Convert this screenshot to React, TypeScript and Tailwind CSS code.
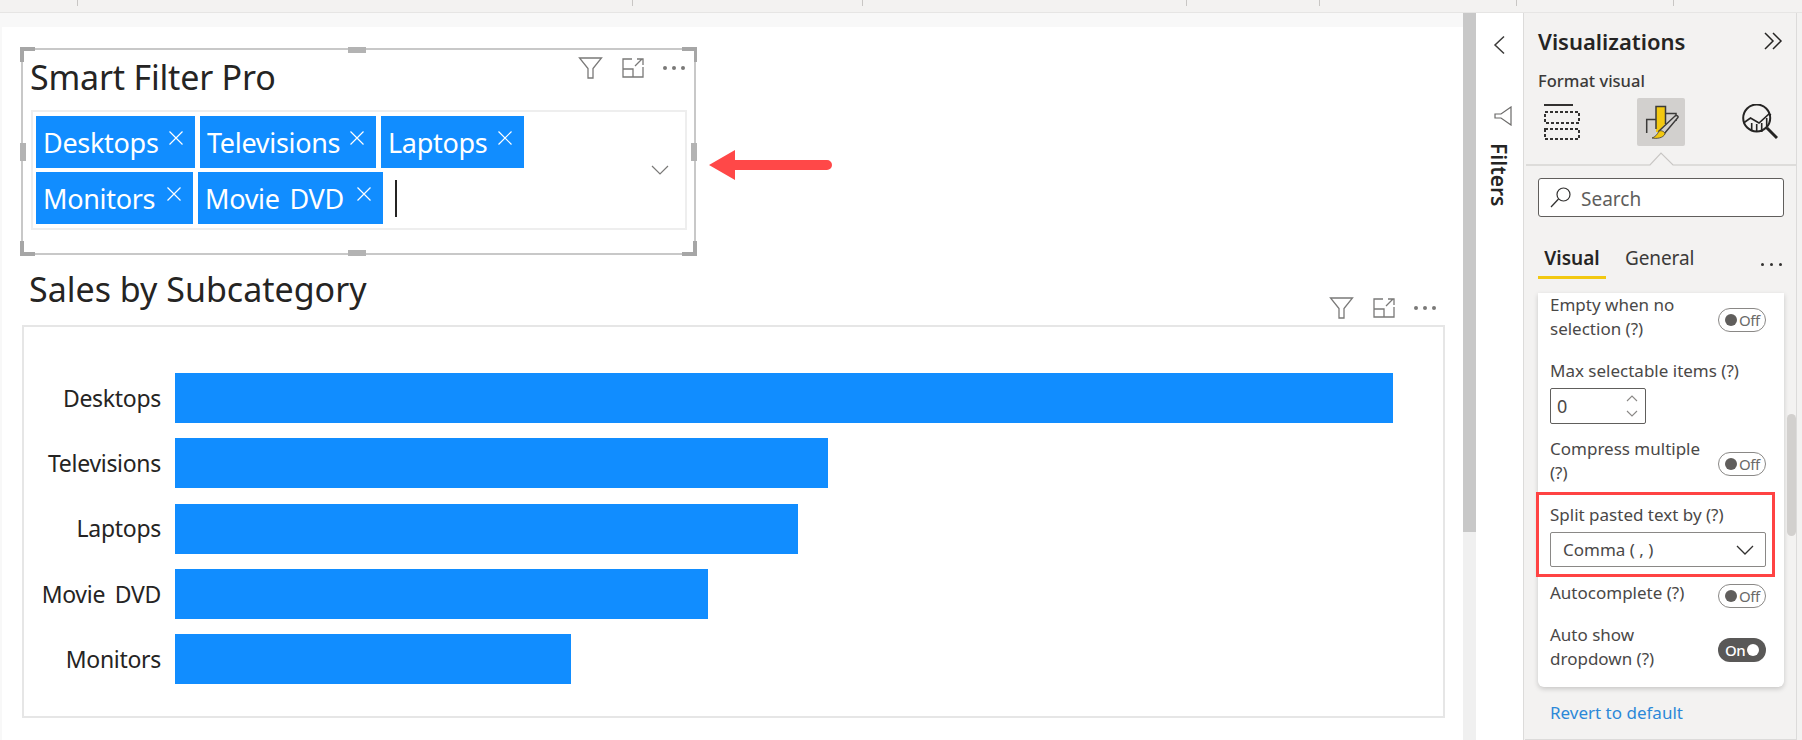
const topSegments = ['w-[78px]', 'w-[555px]', 'w-[230px]', 'w-[324px]', 'w-[133px]', 'w-[197px]', 'w-[157px]']

const bars = [
  { label: 'Desktops', width: 'w-[1218px]' },
  { label: 'Televisions', width: 'w-[653px]' },
  { label: 'Laptops', width: 'w-[623px]' },
  { label: 'Movie DVD', width: 'w-[533px]' },
  { label: 'Monitors', width: 'w-[396px]' },
]

function FunnelIcon() {
  return (
    <svg width="25" height="22" viewBox="0 0 25 22" fill="none" stroke="#7a7978" strokeWidth="1.3">
      <path d="M1.5 1h22l-8.5 10.5V21h-5v-9.5z" />
    </svg>
  )
}

function ExpandIcon() {
  return (
    <svg width="22" height="20" viewBox="0 0 22 20" fill="none" stroke="#7a7978" strokeWidth="1.3">
      <path d="M10 1H1v18h20V9M1 11h10v8M13 8l7-7M15 1h6v6" />
    </svg>
  )
}

function Dots() {
  return (
    <div className="flex gap-[5px]">
      <span className="w-[4px] h-[4px] rounded-full bg-[#7a7978]" />
      <span className="w-[4px] h-[4px] rounded-full bg-[#7a7978]" />
      <span className="w-[4px] h-[4px] rounded-full bg-[#7a7978]" />
    </div>
  )
}

function VisualIcons() {
  return (
    <div className="flex items-center">
      <div className="w-[26px] flex justify-center"><FunnelIcon /></div>
      <div className="w-[23px] ml-[18px] flex justify-center"><ExpandIcon /></div>
      <div className="w-[22px] ml-[19px] flex justify-center"><Dots /></div>
    </div>
  )
}

function CloseIcon() {
  return (
    <svg width="16" height="16" viewBox="0 0 16 16" fill="none" stroke="#ffffff" strokeWidth="1.2" className="shrink-0">
      <path d="M1.5 1.5l13 13M14.5 1.5l-13 13" />
    </svg>
  )
}

function Chip({ label, width }: { label: string; width: string }) {
  return (
    <div className={`${width} h-[52px] bg-[#118dff] text-white flex items-center justify-between pl-[7px] pr-[11px]`}>
      <span className="text-[27px] leading-none tracking-[-0.3px] [word-spacing:3px] whitespace-nowrap">{label}</span>
      <span className="-mt-[8px]"><CloseIcon /></span>
    </div>
  )
}

function Toggle({ on }: { on?: boolean }) {
  if (on) {
    return (
      <div className="w-[48px] h-[24px] rounded-full bg-[#595857] flex items-center justify-between pl-[7px] pr-[7px] text-white">
        <span className="text-[15px] leading-none font-medium tracking-[-0.5px]">On</span>
        <span className="w-[12px] h-[12px] rounded-full bg-white" />
      </div>
    )
  }
  return (
    <div className="w-[48px] h-[24px] rounded-full border border-[#8a8886] bg-white flex items-center pl-[6px] gap-[2px] text-[#6b6a69]">
      <span className="w-[12px] h-[12px] rounded-full bg-[#605e5c]" />
      <span className="text-[15px] leading-none tracking-[-0.5px]">Off</span>
    </div>
  )
}

function Handle({ className }: { className: string }) {
  return <div className={`absolute bg-[#b3b3b3] ${className}`} />
}

function Corner({ className, d }: { className: string; d: string }) {
  return (
    <svg width="15" height="15" viewBox="0 0 15 15" className={`absolute ${className}`} fill="#a6a6a6">
      <path d={d} />
    </svg>
  )
}

function SmartFilter() {
  return (
    <div className="relative ml-[19px] mt-[21px] w-[675px] h-[207px] border-2 border-[#c8c8c8] px-[8px]">
      <Corner className="-left-[3px] -top-[3px]" d="M0 0h15v4H4v11H0z" />
      <Corner className="-right-[3px] -top-[3px]" d="M0 0h15v15h-3V4H0z" />
      <Corner className="-left-[3px] -bottom-[3px]" d="M0 0h4v11h11v4H0z" />
      <Corner className="-right-[3px] -bottom-[3px]" d="M11 0h4v15H0v-4h11z" />
      <Handle className="left-[325px] -top-[3px] w-[18px] h-[6px]" />
      <Handle className="left-[325px] -bottom-[3px] w-[18px] h-[6px]" />
      <Handle className="-left-[3px] top-[93px] w-[6px] h-[18px]" />
      <Handle className="-right-[3px] top-[93px] w-[6px] h-[18px]" />

      <div className="h-[60px] flex items-start justify-between pr-[1px]">
        <h1 className="-ml-[1px] text-[34px] leading-[54px] tracking-[-0.2px] text-[#252423]">Smart Filter Pro</h1>
        <div className="mt-[7px]"><VisualIcons /></div>
      </div>

      <div className="w-[656px] h-[120px] border-2 border-[#eeeeee] flex items-center">
        <div className="w-[600px] pl-[3px] flex flex-wrap gap-x-[5px] gap-y-[4px]">
          <Chip label="Desktops" width="w-[159px]" />
          <Chip label="Televisions" width="w-[176px]" />
          <Chip label="Laptops" width="w-[143px]" />
          <Chip label="Monitors" width="w-[157px]" />
          <Chip label="Movie DVD" width="w-[185px]" />
          <div className="h-[52px] flex items-center ml-[7px]">
            <div className="w-[2px] h-[37px] bg-[#252423]" />
          </div>
        </div>
        <svg width="18" height="10" viewBox="0 0 18 10" fill="none" stroke="#7a7978" strokeWidth="1.2" className="ml-[18px]">
          <path d="M1 1l8 8 8-8" />
        </svg>
      </div>
    </div>
  )
}

function SalesChart() {
  return (
    <div className="ml-[20px] w-[1423px]">
      <div className="h-[70px] flex items-start justify-between pl-[7px] pr-[9px]">
        <h2 className="text-[34px] leading-[68px] tracking-[0px] text-[#252423]">Sales by Subcategory</h2>
        <div className="mt-[42px]"><VisualIcons /></div>
      </div>
      <div className="h-[393px] border-2 border-[#e6e6e6] pt-[46px] flex flex-col gap-[15.25px]">
        {bars.map((bar) => (
          <div key={bar.label} className="flex items-center h-[50px]">
            <div className="w-[137px] text-right text-[23px] tracking-[-0.3px] [word-spacing:4px] text-[#252423] whitespace-nowrap">{bar.label}</div>
            <div className={`ml-[14px] h-full bg-[#118dff] ${bar.width}`} />
          </div>
        ))}
      </div>
    </div>
  )
}

function FieldsIcon() {
  return (
    <svg width="36" height="36" viewBox="0 0 36 36" fill="none" stroke="#323130" strokeWidth="2">
      <path d="M0 1h29" />
      <path strokeDasharray="3 2" d="M1 8h34v11H1zM1 25h34v10H1z" />
    </svg>
  )
}

function FormatIcon() {
  return (
    <svg width="42" height="42" viewBox="0 0 42 42" fill="none">
      <g transform="translate(3 3)">
        <path d="M13 3h9v17l-7 8h-2z" fill="#f2c811" />
        <path d="M3.7 29V15.5H13M13 25V2.5h9.5V20M22.5 9.5H33V17" stroke="#3b3a39" strokeWidth="1.5" />
        <path d="M16 27L32 12c2-1 3.5 0 3 1.5L21 30z" fill="#d2d0ce" stroke="#3b3a39" strokeWidth="1.5" />
        <path d="M16 27c3-1 6 1 6 3-2 4-8 5-13 4 3-1 5-3 7-7z" fill="#f2c811" stroke="#3b3a39" strokeWidth="0.8" />
      </g>
    </svg>
  )
}

function AnalyticsIcon() {
  return (
    <svg width="36" height="36" viewBox="0 0 36 36" fill="none" stroke="#252423" strokeWidth="2">
      <circle cx="14.7" cy="14" r="13.5" />
      <path d="M1.5 19l7-5 8.5 5 10-9 2 1" strokeWidth="1.6" />
      <path d="M9.7 19v8M14.7 20v8M19.7 19v9M24.7 14v11" strokeWidth="1.6" />
      <path d="M25 24l10 10" strokeWidth="3" />
    </svg>
  )
}

function Label({ children }: { children: React.ReactNode }) {
  return <div className="text-[17px] leading-[24px] text-[#4a4847] whitespace-nowrap">{children}</div>
}

function FormatCard() {
  return (
    <div className="relative mt-[14px] w-[246px] h-[394px] bg-white rounded-b-[6px] shadow-[0_2px_5px_rgba(0,0,0,0.18)] pl-[12px] pr-[18px]">
      <div className="flex justify-between">
        <Label>Empty when no<br />selection (?)</Label>
        <div className="mt-[15px]"><Toggle /></div>
      </div>

      <div className="mt-[18px]"><Label>Max selectable items (?)</Label></div>
      <div className="mt-[5px] w-[96px] h-[36px] border border-[#605e5c] rounded-[2px] flex items-center justify-between pl-[6px] pr-[7px]">
        <span className="text-[18px] text-[#4a4847]">0</span>
        <svg width="12" height="24" viewBox="0 0 12 24" fill="none" stroke="#8a8886" strokeWidth="1.1">
          <path d="M1 7l5-5 5 5M1 17l5 5 5-5" />
        </svg>
      </div>

      <div className="mt-[13px] flex justify-between">
        <Label>Compress multiple<br />(?)</Label>
        <div className="mt-[15px]"><Toggle /></div>
      </div>

      <div className="mt-[18px]"><Label>Split pasted text by (?)</Label></div>
      <div className="mt-[5px] w-[216px] h-[35px] border border-[#8a8886] rounded-[2px] flex items-center justify-between pl-[12px] pr-[11px]">
        <span className="text-[17px] text-[#4a4847]">Comma ( , )</span>
        <svg width="18" height="10" viewBox="0 0 18 10" fill="none" stroke="#323130" strokeWidth="1.3">
          <path d="M1 1l8 8 8-8" />
        </svg>
      </div>

      <div className="mt-[14px] flex justify-between">
        <Label>Autocomplete (?)</Label>
        <div className="mt-[3px]"><Toggle /></div>
      </div>

      <div className="mt-[15px] flex justify-between">
        <Label>Auto show<br />dropdown (?)</Label>
        <div className="mt-[15px]"><Toggle on /></div>
      </div>

      {/* annotation box drawn over the setting */}
      <div className="absolute left-[-2px] top-[199px] w-[239px] h-[85px] border-[3px] border-[#ff4343]" />
    </div>
  )
}

function VisualizationsPane() {
  return (
    <aside className="relative w-[272px] h-[727px] ml-[1px] bg-[#f3f2f1] border-r border-[#dcdbda] border-b pl-[13px]">
      <div className="flex items-center justify-between h-[38px] mt-[9px] pr-[13px]">
        <h3 className="text-[22px] leading-none font-semibold text-[#252423]">Visualizations</h3>
        <svg width="20" height="18" viewBox="0 0 20 18" fill="none" stroke="#252423" strokeWidth="1.5">
          <path d="M2 1l8 8-8 8M10 1l8 8-8 8" />
        </svg>
      </div>
      <div className="mt-[10px] text-[16.5px] leading-[22px] font-medium text-[#3b3a39]">Format visual</div>

      <div className="relative h-[48px] mt-[6px] -ml-[1px] w-[254px]">
        <div className="flex items-center h-full pl-[7px]">
          <FieldsIcon />
          <div className="ml-[57px] w-[48px] h-[48px] bg-[#d2d0ce] rounded-[2px] flex items-center justify-center">
            <FormatIcon />
          </div>
          <div className="ml-[57px]"><AnalyticsIcon /></div>
        </div>
      </div>

      <div className="relative h-[20px] mt-[6px] -ml-[13px] w-[271px]">
        <svg width="271" height="20" viewBox="0 0 271 20" fill="none" stroke="#c8c6c4" strokeWidth="1.2" className="block">
          <path d="M1 12h124l11-12 12 12h123" transform="translate(0 1)" />
        </svg>
      </div>

      <div className="mt-[6px] w-[246px] h-[39px] bg-white border border-[#605e5c] rounded-[3px] flex items-center pl-[11px] gap-[10px]">
        <svg width="21" height="21" viewBox="0 0 21 21" fill="none" stroke="#323130" strokeWidth="1.2">
          <circle cx="13.5" cy="7.5" r="6.5" />
          <path d="M8.5 12L1 20" />
        </svg>
        <span className="text-[19px] leading-[24px] pt-[3px] text-[#605e5c]">Search</span>
      </div>

      <div className="mt-[21px] flex items-start w-[246px] relative">
        <div className="w-[68px] h-[41px] border-b-[3px] border-[#f2c811] text-center text-[19px] leading-[40px] font-semibold text-[#252423]">Visual</div>
        <div className="ml-[19px] text-[19px] leading-[40px] text-[#3b3a39] tracking-[-0.1px]">General</div>
        <div className="absolute right-[2px] top-[25px] flex gap-[6px]">
          <span className="w-[3px] h-[3px] rounded-full bg-[#323130]" />
          <span className="w-[3px] h-[3px] rounded-full bg-[#323130]" />
          <span className="w-[3px] h-[3px] rounded-full bg-[#323130]" />
        </div>
      </div>

      <FormatCard />

      <div className="mt-[14px] ml-[12px] text-[17px] leading-[24px] text-[#2b88d8]">Revert to default</div>

      <div className="absolute right-[0px] top-[401px] w-[9px] h-[122px] rounded-full bg-[#d2d0ce]" />
    </aside>
  )
}

export default function App() {
  return (
    <div className="relative w-[1802px] h-[740px] overflow-hidden bg-[#f3f2f1] font-['Noto_Sans','Open_Sans',sans-serif]">
      <div className="h-[13px] border-b border-[#e6e5e4] flex items-start">
        {topSegments.map((width, i) => (
          <div key={i} className={`${width} h-[6px] border-r border-[#c8c6c4]`} />
        ))}
      </div>

      <div className="flex h-[727px]">
        <main className="w-[1463px] bg-[#f8f8f8] pt-[14px] pl-[2px]">
          <div className="bg-white h-[713px] overflow-hidden">
            <SmartFilter />
            <SalesChart />
          </div>
        </main>

        <div className="w-[13px] h-full bg-[#f0f0f0]">
          <div className="h-[519px] bg-[#c8c8c8]" />
        </div>

        <div className="w-[48px] h-full bg-white flex flex-col items-center border-r border-[#dcdbda]">
          <svg width="13" height="20" viewBox="0 0 13 20" fill="none" stroke="#3b3a39" strokeWidth="1.5" className="mt-[22px]">
            <path d="M11 1.5L2 10l9 8.5" />
          </svg>
          <svg width="18" height="20" viewBox="0 0 18 20" fill="none" stroke="#6b6a69" strokeWidth="1.2" className="mt-[51px] ml-[6px]">
            <path d="M17 1v18L7 12H1V8h6z" />
          </svg>
          <div className="mt-[17px] -ml-[2px] [writing-mode:vertical-rl] text-[21px] leading-none font-semibold text-[#252423]">Filters</div>
        </div>

        <VisualizationsPane />
      </div>

      {/* red arrow annotation */}
      <svg width="124" height="32" viewBox="0 0 124 32" className="absolute left-[708px] top-[149px]" fill="#ff4848">
        <path d="M1 16L27 1v10h92a5 5 0 0 1 0 10H27v10z" />
      </svg>
    </div>
  )
}
